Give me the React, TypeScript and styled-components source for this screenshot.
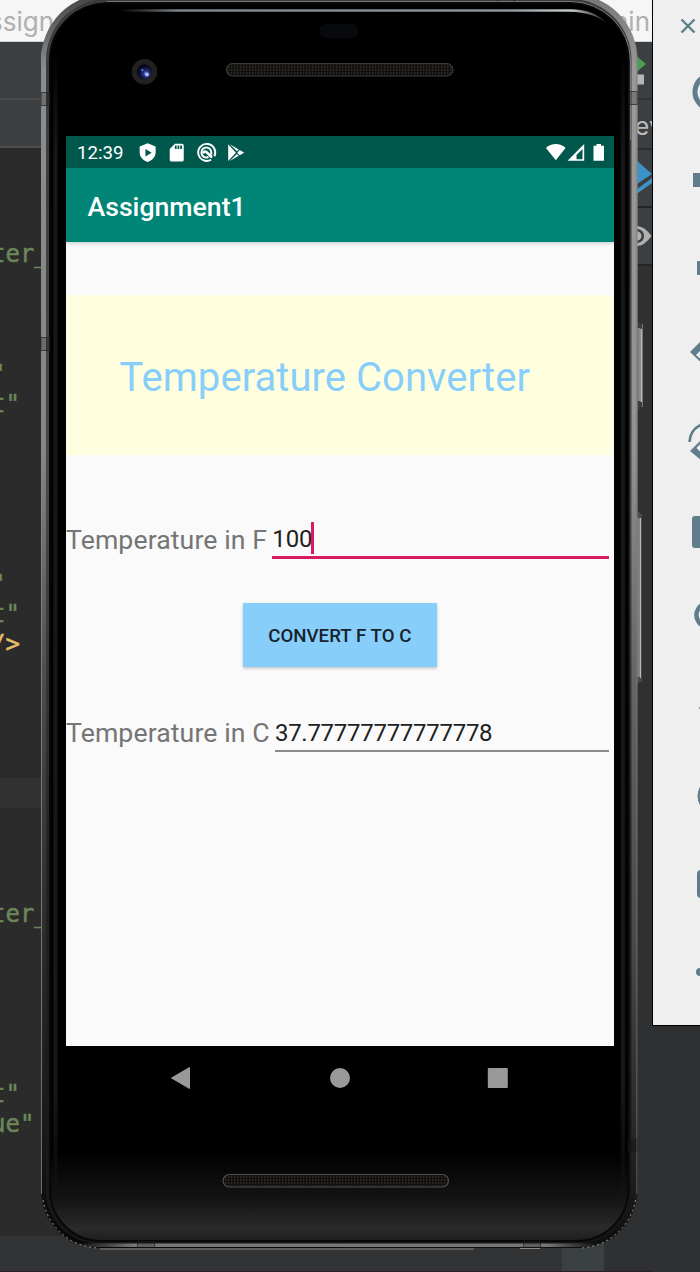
import React from "react";
import styled, { createGlobalStyle } from "styled-components";

const GlobalStyle = createGlobalStyle`
  *, *::before, *::after { box-sizing: border-box; }
  html, body { margin: 0; padding: 0; }
  body { overflow: hidden; background: #2f3032; font-family: Roboto, "Liberation Sans", sans-serif; }
  svg { display: block; overflow: visible; }
`;

const Desktop = styled.div`
  position: relative;
  width: 700px;
  height: 1272px;
  overflow: hidden;
`;

/* ---------- code editor window in the background ---------- */

const Ide = styled.div`
  display: flex;
  flex-direction: column;
  width: 652px;
  height: 1272px;
  overflow: hidden;
  background: #2f3032;
  border-bottom: 1px solid #2b2029;
`;

const IdeTitle = styled.div`
  display: flex;
  justify-content: space-between;
  height: 42px;
  padding: 6px 2px 0 0;
  background: #f6f6f6;
  border-bottom: 1px solid #d0d0d0;
  color: #b0b0b0;
  font: 26px/32px Inter, "Liberation Sans", sans-serif;
`;

const TitleStart = styled.span`
  margin-left: -11px;
`;

const IdeMain = styled.div`
  display: flex;
  flex: 1;
`;

const EditorSide = styled.div`
  display: flex;
  flex-direction: column;
  width: 340px;
`;

const InspectorSide = styled.div`
  display: flex;
  flex-direction: column;
  flex: 1;
`;

const ToolStrip = styled.div<{ $h: number; $line: string }>`
  display: flex;
  align-items: center;
  justify-content: flex-end;
  overflow: hidden;
  height: ${(p) => p.$h}px;
  background: #3c3f41;
  border-bottom: 2px solid ${(p) => p.$line};
  color: #bbbbbb;
  font: 25px/30px Inter, "Liberation Sans", sans-serif;
`;

const TabText = styled.span`
  margin: 5px -11px 0 0;
`;

const Code = styled.div`
  height: 1088px;
  overflow: hidden;
  background: #2b2b2b;
  font: 24px/30px "DejaVu Sans Mono", monospace;
  -webkit-text-stroke: 0.5px currentColor;
`;

const CodeLine = styled.div<{ $tone?: string; $active?: boolean }>`
  height: 30px;
  padding-top: 1px;
  margin-left: -9px;
  white-space: pre;
  color: ${(p) => p.$tone ?? "#6a8759"};
  background: ${(p) => (p.$active ? "#323232" : "transparent")};
`;

const IdeFooter = styled.div`
  display: flex;
  height: 36px;
  padding-left: 562px;
  width: 652px;
  background: linear-gradient(90deg, #313335 0 600px, #2f3032 600px);
`;

const FooterTab = styled.div`
  width: 42px;
  background: #3b4043;
`;

const codeRows: Record<number, { text: string; tone?: string }> = {
  3: { text: "ter_" },
  7: { text: '"' },
  8: { text: 't"' },
  14: { text: '"' },
  15: { text: 't"' },
  16: { text: "/>", tone: "#e8bf6a" },
  25: { text: "ter_" },
  31: { text: 't"' },
  32: { text: 'ue"' },
};

/* ---------- emulated phone ---------- */

const Device = styled.div`
  position: absolute;
  left: 36px;
  top: 0;
  display: grid;
  width: 612px;
  height: 1256px;
  > * { grid-area: 1 / 1; }
`;

const Face = styled.div`
  display: flex;
  flex-direction: column;
  width: 578px;
  padding: 136px 0 0 30px;
`;

const Screen = styled.div`
  display: flex;
  flex-direction: column;
  height: 910px;
  background: #fafafa;
`;

const StatusBar = styled.div`
  display: flex;
  align-items: center;
  height: 32px;
  padding: 1px 10px 0 11px;
  background: #00574b;
  color: #fff;
  font-size: 18.67px;
`;

const Clock = styled.span`
  width: 60px;
  padding-top: 1px;
`;

const Notifications = styled.div`
  display: flex;
  flex: 1;
  gap: 8px;
`;

const Signals = styled.div`
  display: flex;
  align-items: center;
`;

const AppBar = styled.div`
  display: flex;
  align-items: center;
  height: 74px;
  padding: 3px 0 0 21.5px;
  background: #008577;
  box-shadow: 0 1px 4px rgba(0, 0, 0, 0.22);
  clip-path: inset(0 0 -8px 0);
  color: #fff;
  font-size: 26.67px;
  font-weight: 500;
`;

const Content = styled.div`
  display: flex;
  flex-direction: column;
  padding-top: 53px;
`;

const Banner = styled.div`
  display: flex;
  align-items: center;
  width: 546px;
  height: 160px;
  padding: 5px 0 0 53.5px;
  background: #ffffe0;
  color: #87cefa;
  font-size: 40px;
  letter-spacing: 0.05px;
  white-space: nowrap;
`;

const FieldRow = styled.div<{ $top: number }>`
  display: flex;
  align-items: flex-start;
  height: 41px;
  margin-top: ${(p) => p.$top}px;
  padding-right: 5px;
`;

const Label = styled.label<{ $h: number }>`
  color: #757575;
  font-size: 26.67px;
  letter-spacing: 0.08px;
  line-height: ${(p) => p.$h}px;
  margin-right: 5.3px;
  white-space: nowrap;
`;

const Field = styled.div<{ $focused?: boolean }>`
  display: flex;
  flex: 1;
  height: ${(p) => (p.$focused ? 41 : 40)}px;
  border-bottom: ${(p) => (p.$focused ? "3px solid #d81b60" : "2px solid #898989")};
  color: #212121;
  font-size: 24px;
  line-height: 43px;
  letter-spacing: ${(p) => (p.$focused ? -0.1 : -0.28)}px;
`;

const Caret = styled.i`
  width: 3px;
  height: 32px;
  margin: 4px 0 0 -1.4px;
  background: #d81b60;
`;

const ConvertButton = styled.button`
  align-self: flex-start;
  width: 193.6px;
  height: 64px;
  margin: 44px 0 0 177px;
  padding: 2px 0 0;
  border: 0;
  background: #87cefa;
  box-shadow: 0 1.5px 3px rgba(0, 0, 0, 0.22);
  color: #17222a;
  font: 500 18.67px Roboto, sans-serif;
  letter-spacing: 0.03px;
  white-space: nowrap;
`;

const NavBar = styled.div`
  display: flex;
  align-items: center;
  justify-content: center;
  gap: 126px;
  height: 64px;
`;

/* ---------- emulator tool window ---------- */

const ToolWindow = styled.div`
  position: absolute;
  left: 652px;
  top: 0;
  display: flex;
  flex-direction: column;
  width: 120px;
  height: 1026px;
  border-left: 1px solid #000;
  border-bottom: 1px solid #000;
  background: #efefef;
`;

const CloseBox = styled.div`
  height: 48px;
  padding: 19px 0 0 28px;
`;

const Tool = styled.div`
  display: flex;
  align-items: center;
  height: 88px;
  padding-left: 37px;
`;

const ink = "#607d8b";

const toolIcons: React.ReactNode[] = [
  <path d="M14 7a17 17 0 1 0 16 0M22 0v18" fill="none" stroke={ink} strokeWidth="5" />,
  <path d="M3 15h9L24 4v36L12 29H3z" fill={ink} />,
  <path d="M7 15h9L28 4v36L16 29H7z" fill={ink} />,
  <path fillRule="evenodd" d="M0 18 16 2a3 3 0 0 1 4 0l22 22-15 16a3 3 0 0 1-4 0zM6 21l19 17 11-14L19 8z" fill={ink} />,
  <g>
    <path d="M-.5 20C0 11 5 5 13 2" fill="none" stroke={ink} strokeWidth="2.600" />
    <path fillRule="evenodd" d="M0 29 15 14l26 15-18 19zM6.500 26 22 41l12-12-21-10z" fill={ink} />
  </g>,
  <path fillRule="evenodd" d="M5 6h8l4-4h12l4 4h8v32H5a3 3 0 0 1-3-3V9a3 3 0 0 1 3-3zM23 13a9 9 0 1 0 .1 0z" fill={ink} />,
  <path d="M28 27 43 41M18.500 5a12 12 0 1 0 .1 0z" fill="none" stroke={ink} strokeWidth="4.500" />,
  <path d="M8.500 22 32 8v28z" fill={ink} />,
  <circle cx="25.500" cy="22" r="16" fill="none" stroke={ink} strokeWidth="4" />,
  <rect x="9" y="10" width="28" height="24" rx="2" fill="none" stroke={ink} strokeWidth="4" />,
  <g fill={ink}><circle cx="10" cy="22" r="4" /><circle cx="23" cy="22" r="4" /><circle cx="36" cy="22" r="4" /></g>,
];

const PhoneArt = () => (
  <svg width="612" height="1256" viewBox="36 0 612 1256">
    <defs>
      <linearGradient id="metal" x1="0" y1="0" x2="0" y2="1">
        <stop offset="0" stopColor="#444" />
        <stop offset="0.06" stopColor="#8d8d8d" />
        <stop offset="0.36" stopColor="#868686" />
        <stop offset="0.55" stopColor="#4b4b4b" />
        <stop offset="0.72" stopColor="#303030" />
        <stop offset="0.92" stopColor="#161616" />
        <stop offset="1" stopColor="#060606" />
      </linearGradient>
      <linearGradient id="metalRight" x1="0" y1="0" x2="0" y2="1">
        <stop offset="0" stopColor="#777" />
        <stop offset="0.06" stopColor="#999" />
        <stop offset="0.36" stopColor="#929292" />
        <stop offset="0.55" stopColor="#646464" />
        <stop offset="0.75" stopColor="#4a4a4a" />
        <stop offset="0.9" stopColor="#292929" />
        <stop offset="1" stopColor="#0d0d0d" />
      </linearGradient>
      <linearGradient id="groove" x1="0" y1="0" x2="0" y2="1">
        <stop offset="0" stopColor="#3a3a3a" />
        <stop offset="0.4" stopColor="#484848" />
        <stop offset="0.7" stopColor="#232323" />
        <stop offset="1" stopColor="#161616" />
      </linearGradient>
      <linearGradient id="chin" x1="0" y1="0" x2="0" y2="1">
        <stop offset="0" stopColor="#000" />
        <stop offset="0.928" stopColor="#000" />
        <stop offset="0.968" stopColor="#151515" />
        <stop offset="0.99" stopColor="#2b2b2b" />
        <stop offset="1" stopColor="#1d1d1d" />
      </linearGradient>
      <linearGradient id="sheen" x1="0" y1="0" x2="0" y2="1">
        <stop offset="0" stopColor="#1c1c1c" stopOpacity="0" />
        <stop offset="0.1" stopColor="#1c1c1c" />
        <stop offset="0.9" stopColor="#1c1c1c" />
        <stop offset="1" stopColor="#1c1c1c" stopOpacity="0" />
      </linearGradient>
      <linearGradient id="rim" x1="0" y1="0" x2="1" y2="0">
        <stop offset="0" stopColor="#666" stopOpacity="0" />
        <stop offset="0.12" stopColor="#77777a" />
        <stop offset="0.9" stopColor="#77777a" />
        <stop offset="1" stopColor="#666" stopOpacity="0" />
      </linearGradient>
      <linearGradient id="gloss" x1="0" y1="0" x2="1" y2="0">
        <stop offset="0" stopColor="#7c858a" stopOpacity="0" />
        <stop offset="0.12" stopColor="#7c858a" />
        <stop offset="0.8" stopColor="#8c9499" />
        <stop offset="0.93" stopColor="#c5cbcd" />
        <stop offset="1" stopColor="#aaa" stopOpacity="0.2" />
      </linearGradient>
      <radialGradient id="lens" cx="0.6" cy="0.62" r="0.6">
        <stop offset="0" stopColor="#7f94f0" />
        <stop offset="0.3" stopColor="#27347f" />
        <stop offset="0.7" stopColor="#0c0f30" />
        <stop offset="1" stopColor="#05050c" />
      </radialGradient>
      <pattern id="mesh" width="3" height="3" patternUnits="userSpaceOnUse">
        <rect width="3" height="3" fill="#12110f" />
        <rect width="1.300" height="2" fill="#2c2a25" />
      </pattern>
      <clipPath id="shell">
        <path d="M107-6H571.500A66 66 0 0 1 637.500 60V1190A58 58 0 0 1 579.500 1248H99A58 58 0 0 1 41 1190V60A66 66 0 0 1 107-6Z" />
      </clipPath>
    </defs>

    <g>
      <path d="M637 322h3v2h3v83h-3v2h-3z" fill="#3c3c3c" />
      <rect x="637.500" y="328" width="3" height="73" fill="#858585" />
      <rect x="640.500" y="329" width="1.500" height="73" fill="#b8b8b8" />
      <rect x="642" y="324" width="1" height="83" fill="#777" />
      <path d="M637 512h3v2h2v168h-3v2h-2z" fill="#4a4a4a" />
      <rect x="637" y="518" width="3" height="159" fill="#808080" />
      <rect x="640" y="518" width="1" height="160" fill="#b8b8b8" />
    </g>

    <g clipPath="url(#shell)">
      <rect x="36" y="-6" width="304" height="1256" fill="url(#metal)" />
      <rect x="340" y="-6" width="304" height="1256" fill="url(#metalRight)" />
      <rect x="100" y="0" width="480" height="2" fill="#6b6969" />
      <rect x="100" y="2" width="480" height="3" fill="#373535" />
      <path d="M107-1H571.500A61 61 0 0 1 631.500 60V1190A54 54 0 0 1 579 1244H99A53 53 0 0 1 46 1190V60A61 61 0 0 1 107-1Z" fill="url(#groove)" />
      <path d="M107 3H571A58 58 0 0 1 628.500 60V1190A52 52 0 0 1 577 1241H100A51 51 0 0 1 50 1190V60A57 57 0 0 1 107 3Z" fill="url(#chin)" stroke="#080808" strokeWidth="2" />
      <path d="M107 1.500H571A60 60 0 0 1 630.500 60V140" fill="none" stroke="#777" strokeWidth="1" />
      <path d="M47.500 60A60 60 0 0 1 107 1.500" fill="none" stroke="#444" />
      <rect x="53" y="50" width="5" height="1150" fill="url(#sheen)" fillOpacity="0.5" />
      <rect x="54" y="50" width="3" height="1150" fill="url(#sheen)" fillOpacity="0.7" />
      <rect x="620.500" y="50" width="5" height="1150" fill="url(#sheen)" fillOpacity="0.5" />
      <rect x="621.500" y="50" width="3" height="1150" fill="url(#sheen)" fillOpacity="0.7" />
      <rect x="70" y="1243.500" width="530" height="3.500" fill="url(#rim)" />
      <rect x="41" y="50" width="1" height="1144" fill="#898989" fillOpacity="0.8" />
      <rect x="636.500" y="50" width="1" height="1144" fill="#777" />
      <g fill="#000" fillOpacity="0.2" stroke="#222" strokeWidth="0.700">
        <rect x="41" y="92.500" width="8.500" height="13" />
        <rect x="41" y="337.500" width="8.500" height="13" />
        <rect x="629" y="91.500" width="8.500" height="13" />
        <rect x="629" y="1139" width="8.500" height="13" />
        <rect x="137.500" y="1242" width="17" height="6" />
        <rect x="523.500" y="1242" width="17" height="6" />
        <path d="M497.500 0v3.500M514.500 0v3.500" />
      </g>
    </g>
    <path d="M100 1249H474M520 1248.500H540" stroke="#8b8787" strokeWidth="1" />
    <path d="M43 1200A58 58 0 0 0 98 1248M635.500 1200A58 58 0 0 1 580 1248" fill="none" stroke="#999" strokeWidth="1" strokeDasharray="2 3" />

    <path d="M120 9.300H570Q595 9.500 606 23 594 12.500 570 11.800H120z" fill="url(#gloss)" />
    <rect x="319" y="24" width="39.500" height="14" rx="7" fill="#08090d" />
    <circle cx="144.500" cy="71.800" r="12.800" fill="#222122" />
    <circle cx="144.500" cy="71.800" r="7.500" fill="url(#lens)" />
    <circle cx="147" cy="74.500" r="2" fill="#a9b8ff" />
    <circle cx="142.300" cy="70" r="1.200" fill="#526ad8" />
    <rect x="226.500" y="63.500" width="226.500" height="12.500" rx="6.200" fill="url(#mesh)" stroke="#3c3b3a" strokeWidth="1.200" />
    <rect x="223" y="1174.500" width="225.500" height="12.500" rx="6.200" fill="url(#mesh)" stroke="#504f4c" strokeWidth="1.200" />
  </svg>
);

export default function App() {
  return (
    <Desktop>
      <GlobalStyle />
      <Ide>
        <IdeTitle>
          <TitleStart>ssign</TitleStart>
          <span>ain</span>
        </IdeTitle>
        <IdeMain>
          <EditorSide>
            <ToolStrip $h={58} $line="#4e4a48" />
            <ToolStrip $h={48} $line="#504d4b" />
            <Code>
              {Array.from({ length: 36 }, (_, i) => (
                <CodeLine key={i} $tone={codeRows[i]?.tone} $active={i === 21}>
                  {codeRows[i]?.text ?? ""}
                </CodeLine>
              ))}
            </Code>
          </EditorSide>
          <InspectorSide>
            <ToolStrip $h={58} $line="#343332">
              <svg width="32" height="58" viewBox="0 0 32 58">
                <path d="M5 5 26 23 5 41z" fill="#499c54" />
                <rect x="14" y="33.500" width="10" height="10" fill="#b5b5b5" />
              </svg>
            </ToolStrip>
            <ToolStrip $h={50} $line="#2c2c2c">
              <TabText>ev</TabText>
            </ToolStrip>
            <ToolStrip $h={58} $line="#242424">
              <svg width="30" height="58" viewBox="0 0 30 58">
                <path d="M3 1 30 25 9 39z" fill="#3c93c8" />
                <path d="M9 44.500 30 29v5L9 49z" fill="#3c93c8" />
              </svg>
            </ToolStrip>
            <ToolStrip $h={58} $line="#242424">
              <svg width="30" height="30" viewBox="0 0 30 30">
                <path fillRule="evenodd" d="M1 15Q15-5 29.500 15 15 35 1 15zM15 8a7 7 0 1 0 .1 0z" fill="#b0b0b0" />
                <circle cx="15" cy="15" r="4.500" fill="#b0b0b0" />
              </svg>
            </ToolStrip>
          </InspectorSide>
        </IdeMain>
        <IdeFooter>
          <FooterTab />
        </IdeFooter>
      </Ide>

      <Device>
        <PhoneArt />
        <Face>
          <Screen>
            <StatusBar>
              <Clock>12:39</Clock>
              <Notifications>
                <svg width="21.300" height="21.300" viewBox="0 0 24 24">
                  <path fillRule="evenodd" fill="#fff" d="M12 1.500 3 5v6.500c0 5 3.800 9.400 9 11 5.200-1.600 9-6 9-11V5zM9.500 7.800l7 4.200-7 4.200z" />
                </svg>
                <svg width="21.300" height="21.300" viewBox="0 0 24 24">
                  <path fillRule="evenodd" fill="#fff" d="M18 2h-8L4.200 8v12c0 1.100.9 2 1.800 2h12c1.100 0 2-.9 2-2V4c0-1.100-.9-2-2-2zm-6 6h-2V4h2zm3 0h-2V4h2zm3 0h-2V4h2z" />
                </svg>
                <svg width="21.300" height="21.300" viewBox="0 0 24 24">
                  <g fill="none" stroke="#fff">
                    <path d="M20.700 16A9.600 9.600 0 1 0 17 20" strokeWidth="2.200" />
                    <path d="M16.600 14.500A5.600 5.600 0 1 0 14 16.900" strokeWidth="2.200" />
                    <path d="M7.500 12.500Q10.500 9.500 12.500 12L18 17.500" strokeWidth="3" />
                  </g>
                </svg>
                <svg width="21.300" height="21.300" viewBox="0 0 24 24">
                  <path fill="#fff" d="M3.600 2.600v18.800l8.700-9.400zM5.500 2.500l8 7.900 1.900-2zM5.500 21.500l8-7.900 1.900 2zM16.600 9.100 13.800 12l2.800 2.900 5-2.900z" />
                </svg>
              </Notifications>
              <Signals>
                <svg width="58" height="20" viewBox="0 0 58 20">
                  <path d="M0 5C5-.4 14.500-.4 19.500 5L9.800 17.300z" fill="#fff" />
                  <path fillRule="evenodd" d="M21.500 17.800 38.200 1v16.800zM30.500 16.300h6V6l-6 6z" fill="#fff" />
                  <path d="M50.500 1h4.500v1.800h3v15H47.500v-15h3z" fill="#fff" />
                </svg>
              </Signals>
            </StatusBar>
            <AppBar>Assignment1</AppBar>
            <Content>
              <Banner>Temperature Converter</Banner>
              <FieldRow $top={63}>
                <Label $h={45}>Temperature in F</Label>
                <Field $focused>
                  100
                  <Caret />
                </Field>
              </FieldRow>
              <ConvertButton>CONVERT F TO C</ConvertButton>
              <FieldRow $top={45}>
                <Label $h={43}>Temperature in C</Label>
                <Field>37.77777777777778</Field>
              </FieldRow>
            </Content>
          </Screen>
          <NavBar>
            <svg width="32" height="32" viewBox="0 0 32 32">
              <path d="M5.500 16 23.500 5.500v21z" fill="#999" stroke="#999" strokeWidth="1" strokeLinejoin="round" />
            </svg>
            <svg width="32" height="32" viewBox="0 0 32 32">
              <circle cx="16" cy="16" r="10" fill="#999" />
            </svg>
            <svg width="32" height="32" viewBox="0 0 32 32">
              <rect x="5.800" y="6" width="20" height="20" rx="1" fill="#999" />
            </svg>
          </NavBar>
        </Face>
      </Device>

      <ToolWindow>
        <CloseBox>
          <svg width="14" height="14" viewBox="0 0 14 14">
            <path d="M.5.5 13.500 13.500M13.500.5.5 13.500" stroke={ink} strokeWidth="2.400" />
          </svg>
        </CloseBox>
        {toolIcons.map((icon, i) => (
          <Tool key={i}>
            <svg width="44" height="44" viewBox="0 0 44 44">{icon}</svg>
          </Tool>
        ))}
      </ToolWindow>
    </Desktop>
  );
}
